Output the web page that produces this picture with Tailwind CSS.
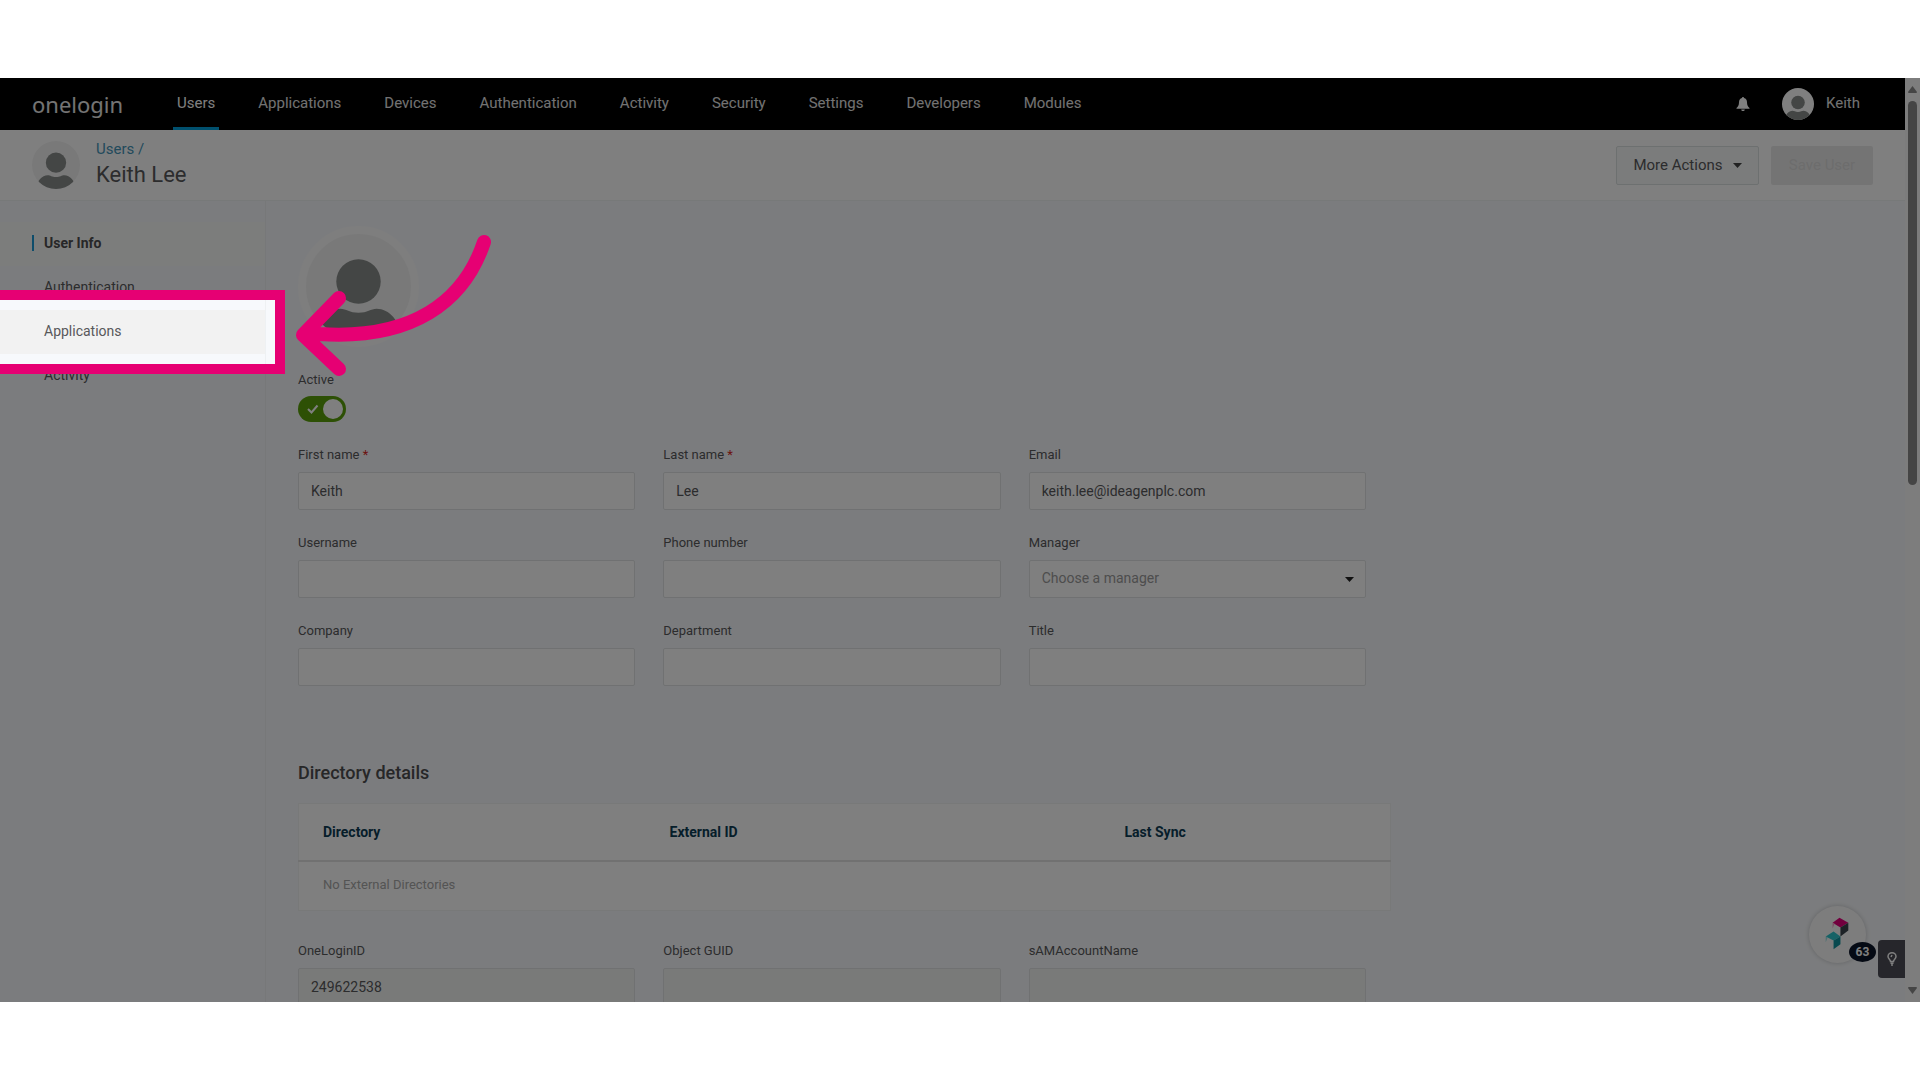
<!DOCTYPE html>
<html lang="en">
  <head>
    <meta charset="UTF-8" />
    <meta name="viewport" content="width=device-width, initial-scale=1.0" />
    <title>Keith Lee - Users - OneLogin</title>
    <script src="https://cdn.jsdelivr.net/npm/@tailwindcss/browser@4"></script>
  </head>
  <body class="bg-white font-['Roboto',sans-serif] text-[#58585b]">
    <!-- Shared avatar artwork -->
    <svg class="hidden">
      <symbol id="person" viewBox="0 0 104 104">
        <clipPath id="personClip"><circle cx="52" cy="52" r="52" /></clipPath>
        <g clip-path="url(#personClip)">
          <circle cx="52" cy="47" r="22" fill="#888c8a" />
          <path
            d="M10 104C10 86 22 74 34 74C40 74 43 78 52 78C61 78 64 74 70 74C82 74 94 86 94 104Z"
            fill="#888c8a"
          />
        </g>
      </symbol>
    </svg>

    <div class="h-screen py-[78px]">
      <div class="relative flex h-full overflow-hidden">
        <div class="flex min-w-0 flex-1 flex-col">
          <!-- Top navigation -->
          <header
            class="flex h-[52px] shrink-0 items-center bg-black pl-8 pr-[45px] text-[15px] text-[#e4e4e4]"
          >
            <a
              href="#"
              class="w-[141px] font-['Noto_Sans',sans-serif] text-[22px] leading-6 text-[#e8e8e8]"
              >onelogin</a
            >
            <nav class="flex h-full gap-[35px]">
              <a
                href="#"
                class="flex items-center border-b-3 border-[#00a0dc] px-1 pt-px text-white"
                >Users</a
              >
              <a href="#" class="flex items-center px-1 pb-0.5">Applications</a>
              <a href="#" class="flex items-center px-1 pb-0.5">Devices</a>
              <a href="#" class="flex items-center px-1 pb-0.5"
                >Authentication</a
              >
              <a href="#" class="flex items-center px-1 pb-0.5">Activity</a>
              <a href="#" class="flex items-center px-1 pb-0.5">Security</a>
              <a href="#" class="flex items-center px-1 pb-0.5">Settings</a>
              <a href="#" class="flex items-center px-1 pb-0.5">Developers</a>
              <a href="#" class="flex items-center px-1 pb-0.5">Modules</a>
            </nav>
            <div class="ml-auto flex items-center gap-8">
              <button type="button" aria-label="Notifications">
                <svg class="h-4 w-[14px]" viewBox="0 0 14 16" fill="#fff">
                  <path
                    d="M7 1C7.700 1 8 1.500 8 2C10 2.500 11 4.200 11 6.300C11 9.500 12 10.800 13.500 12V12.800H.5V12C2 10.800 3 9.500 3 6.300C3 4.200 4 2.500 6 2C6 1.500 6.300 1 7 1ZM5.200 13.400H8.800C8.700 14.500 8 15 7 15S5.300 14.500 5.200 13.400Z"
                  />
                </svg>
              </button>
              <button type="button" class="flex items-center gap-3">
                <svg class="size-8 rounded-full bg-white">
                  <use href="#person" />
                </svg>
                <span class="pb-0.5">Keith</span>
              </button>
            </div>
          </header>

          <!-- Page title bar -->
          <div
            class="flex h-[71px] shrink-0 items-center justify-between border-b border-[#eef2f2] bg-white px-8"
          >
            <div class="flex items-center gap-4">
              <svg class="size-12 rounded-full bg-[#f3f3f3]">
                <use href="#person" />
              </svg>
              <div>
                <a href="#" class="block text-[15px] leading-5 text-[#4594b8]"
                  >Users /</a
                >
                <h1 class="text-[22px] leading-8">Keith Lee</h1>
              </div>
            </div>
            <div class="flex gap-3">
              <button
                type="button"
                class="flex h-[39px] w-[143px] items-center justify-center gap-2.5 rounded-xs border border-[#dbe0e0] bg-[#f6f9f8] text-[15px]"
              >
                More Actions
                <svg class="h-[5px] w-[9px]" viewBox="0 0 9 5">
                  <path d="M0 0H9L4.500 5Z" fill="#444" />
                </svg>
              </button>
              <button
                type="button"
                disabled
                class="h-[39px] w-[102px] rounded-xs bg-[#e9e9e9] text-[15px] text-[#dadada]"
              >
                Save User
              </button>
            </div>
          </div>

          <div class="flex min-h-0 flex-1 bg-[#f7f9fc]">
            <!-- Sidebar -->
            <aside
              class="w-[266px] shrink-0 border-r border-[#eef1f3] pt-[21px] text-sm"
            >
              <ul>
                <li>
                  <a
                    href="#"
                    class="flex h-11 items-center bg-[#f9fbf9] pb-0.5 pl-8 font-bold text-[#4e4e50]"
                  >
                    <span class="mr-2.5 h-4 w-0.5 bg-[#1c9ad6]"></span>User Info
                  </a>
                </li>
                <li>
                  <a href="#" class="flex h-11 items-center pb-0.5 pl-11"
                    >Authentication</a
                  >
                </li>
                <li class="relative">
                  <a
                    href="#"
                    class="flex h-11 items-center bg-[#f2f2f2] pb-0.5 pl-11"
                    >Applications</a
                  >
                  <!-- Spotlight: the shadow dims everything around it -->
                  <div
                    class="pointer-events-none absolute -inset-y-5 -left-2.5 -right-5 z-40 border-10 border-[#e60073] shadow-[0_0_0_3000px_rgba(0,0,0,0.5)]"
                  ></div>
                  <svg
                    class="pointer-events-none absolute -top-20 left-[290px] z-50 h-40 w-[210px]"
                    viewBox="0 0 210 160"
                    fill="none"
                    stroke="#e60073"
                    stroke-width="14"
                    stroke-linecap="round"
                    stroke-linejoin="round"
                  >
                    <path
                      d="M194 12C174 72 122 110 30 104L13 105M49 68L13 105L49 139"
                    />
                  </svg>
                </li>
                <li>
                  <a href="#" class="flex h-11 items-center pb-0.5 pl-11"
                    >Activity</a
                  >
                </li>
              </ul>
            </aside>

            <!-- User form -->
            <main class="min-w-0 flex-1 overflow-hidden pl-8 pt-[25px]">
              <svg
                class="size-[121px] rounded-full border-8 border-[#fcfcfc] bg-[#f3f3f3]"
              >
                <use href="#person" />
              </svg>
              <form class="mt-[23px] text-sm">
                <label for="active" class="block text-[13px] leading-5"
                  >Active</label
                >
                <div class="relative mt-1.5 h-[26px] w-12">
                  <input
                    type="checkbox"
                    id="active"
                    checked
                    class="block h-full w-full appearance-none rounded-full bg-[#5aa10a]"
                  />
                  <svg
                    class="pointer-events-none absolute inset-0 h-full w-full"
                    viewBox="0 0 48 26"
                    fill="none"
                  >
                    <path
                      d="M10 13L13.500 16.500L19.500 9.500"
                      stroke="#fff"
                      stroke-width="2"
                    />
                    <circle cx="35" cy="13" r="10" fill="#fff" />
                  </svg>
                </div>

                <div
                  class="mt-[23px] grid w-[1068px] max-w-full grid-cols-3 gap-x-7 gap-y-[23px]"
                >
                  <div>
                    <label for="first" class="block text-[13px] leading-5"
                      >First name <span class="text-[#d9261c]">*</span></label
                    >
                    <input
                      type="text"
                      id="first"
                      value="Keith"
                      class="mt-[7px] h-[38px] w-full rounded-xs border border-[#e0e3e4] bg-white px-3"
                    />
                  </div>
                  <div>
                    <label for="last" class="block text-[13px] leading-5"
                      >Last name <span class="text-[#d9261c]">*</span></label
                    >
                    <input
                      type="text"
                      id="last"
                      value="Lee"
                      class="mt-[7px] h-[38px] w-full rounded-xs border border-[#e0e3e4] bg-white px-3"
                    />
                  </div>
                  <div>
                    <label for="email" class="block text-[13px] leading-5"
                      >Email</label
                    >
                    <input
                      type="email"
                      id="email"
                      value="keith.lee@ideagenplc.com"
                      class="mt-[7px] h-[38px] w-full rounded-xs border border-[#e0e3e4] bg-white px-3"
                    />
                  </div>
                  <div>
                    <label for="username" class="block text-[13px] leading-5"
                      >Username</label
                    >
                    <input
                      type="text"
                      id="username"
                      class="mt-[7px] h-[38px] w-full rounded-xs border border-[#e0e3e4] bg-white px-3"
                    />
                  </div>
                  <div>
                    <label for="phone" class="block text-[13px] leading-5"
                      >Phone number</label
                    >
                    <input
                      type="tel"
                      id="phone"
                      class="mt-[7px] h-[38px] w-full rounded-xs border border-[#e0e3e4] bg-white px-3"
                    />
                  </div>
                  <div>
                    <label for="manager" class="block text-[13px] leading-5"
                      >Manager</label
                    >
                    <div class="relative mt-[7px]">
                      <select
                        id="manager"
                        class="block h-[38px] w-full appearance-none rounded-xs border border-[#e0e3e4] bg-white px-3 pb-0.5 text-[#9b9b9b]"
                      >
                        <option>Choose a manager</option>
                      </select>
                      <svg
                        class="pointer-events-none absolute right-3 top-[17px] h-[5px] w-[9px]"
                        viewBox="0 0 9 5"
                      >
                        <path d="M0 0H9L4.500 5Z" fill="#222" />
                      </svg>
                    </div>
                  </div>
                  <div>
                    <label for="company" class="block text-[13px] leading-5"
                      >Company</label
                    >
                    <input
                      type="text"
                      id="company"
                      class="mt-[7px] h-[38px] w-full rounded-xs border border-[#e0e3e4] bg-white px-3"
                    />
                  </div>
                  <div>
                    <label for="department" class="block text-[13px] leading-5"
                      >Department</label
                    >
                    <input
                      type="text"
                      id="department"
                      class="mt-[7px] h-[38px] w-full rounded-xs border border-[#e0e3e4] bg-white px-3"
                    />
                  </div>
                  <div>
                    <label for="title" class="block text-[13px] leading-5"
                      >Title</label
                    >
                    <input
                      type="text"
                      id="title"
                      class="mt-[7px] h-[38px] w-full rounded-xs border border-[#e0e3e4] bg-white px-3"
                    />
                  </div>
                </div>

                <h2 class="mt-[75px] text-lg font-medium leading-6 text-[#4e4e50]">
                  Directory details
                </h2>
                <table
                  class="mt-[18px] w-[1093px] max-w-full table-fixed border border-[#f0f2f2] bg-white text-left text-[13px]"
                >
                  <thead>
                    <tr
                      class="h-[57px] border-b-2 border-[#e3e3e3] text-sm font-bold text-[#0d3c55]"
                    >
                      <th class="w-[347px] pl-6">Directory</th>
                      <th class="w-[455px] pl-6">External ID</th>
                      <th class="pl-6">Last Sync</th>
                    </tr>
                  </thead>
                  <tbody>
                    <tr class="h-[50px]">
                      <td colspan="3" class="pl-6 text-[#a8a8a8]">
                        No External Directories
                      </td>
                    </tr>
                  </tbody>
                </table>

                <div
                  class="mt-[30px] grid w-[1068px] max-w-full grid-cols-3 gap-x-7"
                >
                  <div>
                    <label for="oneloginId" class="block text-[13px] leading-5"
                      >OneLoginID</label
                    >
                    <input
                      type="text"
                      id="oneloginId"
                      value="249622538"
                      readonly
                      class="mt-[7px] h-[38px] w-full rounded-xs border border-[#e0e3e4] bg-[#f2f5f3] px-3"
                    />
                  </div>
                  <div>
                    <label for="guid" class="block text-[13px] leading-5"
                      >Object GUID</label
                    >
                    <input
                      type="text"
                      id="guid"
                      readonly
                      class="mt-[7px] h-[38px] w-full rounded-xs border border-[#e0e3e4] bg-[#f2f5f3] px-3"
                    />
                  </div>
                  <div>
                    <label for="sam" class="block text-[13px] leading-5"
                      >sAMAccountName</label
                    >
                    <input
                      type="text"
                      id="sam"
                      readonly
                      class="mt-[7px] h-[38px] w-full rounded-xs border border-[#e0e3e4] bg-[#f2f5f3] px-3"
                    />
                  </div>
                </div>
              </form>
            </main>
          </div>
        </div>

        <!-- Scrollbar -->
        <div
          class="flex w-[15px] shrink-0 flex-col items-center bg-[#fafafa] py-2"
        >
          <svg class="h-[7px] w-[9px]" viewBox="0 0 9 7">
            <path d="M4.500 0L9 6Q9 7 8 7H1Q0 7 0 6Z" fill="#8b8b8b" />
          </svg>
          <div class="mt-2 h-[384px] w-[9px] rounded-full bg-[#8b8b8b]"></div>
          <svg class="mt-auto h-[7px] w-[9px]" viewBox="0 0 9 7">
            <path d="M4.500 7L9 1Q9 0 8 0H1Q0 0 0 1Z" fill="#8b8b8b" />
          </svg>
        </div>

        <!-- Floating help widgets -->
        <button
          type="button"
          aria-label="Help tour"
          class="absolute bottom-[39px] right-[54px] size-[57px] rounded-full bg-[#fbfbfb] shadow-[0_0_5px_rgba(0,0,0,0.2)]"
        >
          <svg class="h-full w-full" viewBox="0 0 58 58">
            <path d="M24 17L31 12L40 17L32 22Z" fill="#e5007d" />
            <path d="M24 17V23L26 18Z" fill="#f3a0c8" />
            <path d="M32 22L40 17V25L32 31Z" fill="#3a454d" />
            <path d="M17 31L25 26L32 31L25 35Z" fill="#2cc5cd" />
            <path d="M17 31V37L19 32Z" fill="#9adfe3" />
            <path d="M25 35L32 31V39L25 44Z" fill="#10939e" />
          </svg>
          <span
            class="absolute -right-2.5 bottom-px flex h-5 w-[27px] items-center justify-center rounded-[50%] bg-[#0a1428] text-xs font-bold text-white"
            >63</span
          >
        </button>
        <button
          type="button"
          aria-label="Tips"
          class="absolute bottom-6 right-[15px] flex h-[38px] w-[27px] items-center justify-center rounded-l-sm bg-[#4c4c56]"
        >
          <svg
            class="h-[14px] w-[10px]"
            viewBox="0 0 10 14"
            fill="none"
            stroke="#fff"
            stroke-width="1.500"
          >
            <path
              d="M3.500 9.500C3.500 7.500 1 7 1 4.600A4 3.800 0 0 1 9 4.600C9 7 6.500 7.500 6.500 9.500ZM3.500 11.300H6.500M4 13H6M5 3L4 5"
            />
          </svg>
        </button>
      </div>
    </div>
  </body>
</html>
